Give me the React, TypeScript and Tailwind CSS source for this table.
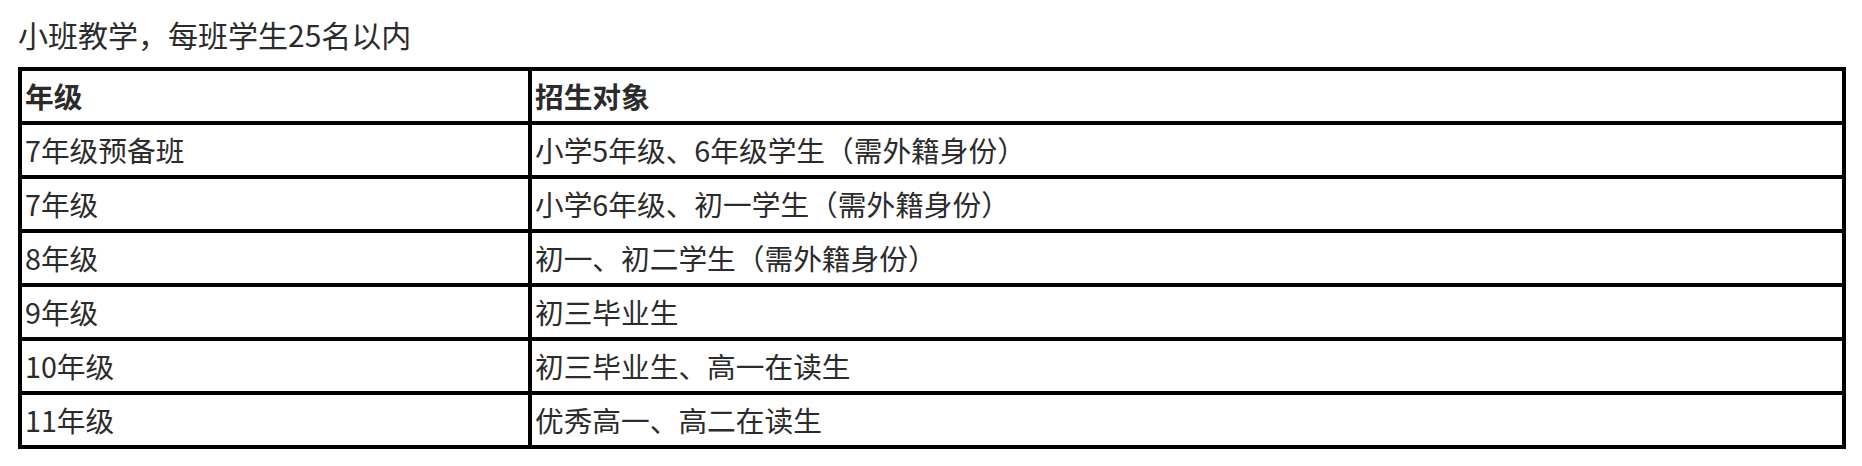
import React from "react";

const rows: [string, string][] = [
  ["7年级预备班", "小学5年级、6年级学生（需外籍身份）"],
  ["7年级", "小学6年级、初一学生（需外籍身份）"],
  ["8年级", "初一、初二学生（需外籍身份）"],
  ["9年级", "初三毕业生"],
  ["10年级", "初三毕业生、高一在读生"],
  ["11年级", "优秀高一、高二在读生"],
];

export default function App() {
  return (
    <div
      className="bg-white w-[1862px] h-[466px] px-[18px] pt-[14px] text-[#2b2b2b]"
      style={{ fontFamily: '"Noto Sans CJK SC", "Noto Sans", sans-serif' }}
    >
      <p className="text-[30px] leading-[40px] m-0">小班教学，每班学生25名以内</p>
      <table className="mt-[13px] w-[1828px] border-2 border-black border-separate border-spacing-0 text-[28.7px]">
        <thead>
          <tr>
            <th className="w-[510px] h-[54px] border-2 border-black px-[3px] py-0 text-left font-bold leading-[50px]">年级</th>
            <th className="h-[54px] border-2 border-black px-[3px] py-0 text-left font-bold leading-[50px]">招生对象</th>
          </tr>
        </thead>
        <tbody>
          {rows.map(([a, b]) => (
            <tr key={a}>
              <td className="w-[510px] h-[54px] border-2 border-black px-[3px] py-0 leading-[50px]">{a}</td>
              <td className="h-[54px] border-2 border-black px-[3px] py-0 leading-[50px]">{b}</td>
            </tr>
          ))}
        </tbody>
      </table>
    </div>
  );
}
